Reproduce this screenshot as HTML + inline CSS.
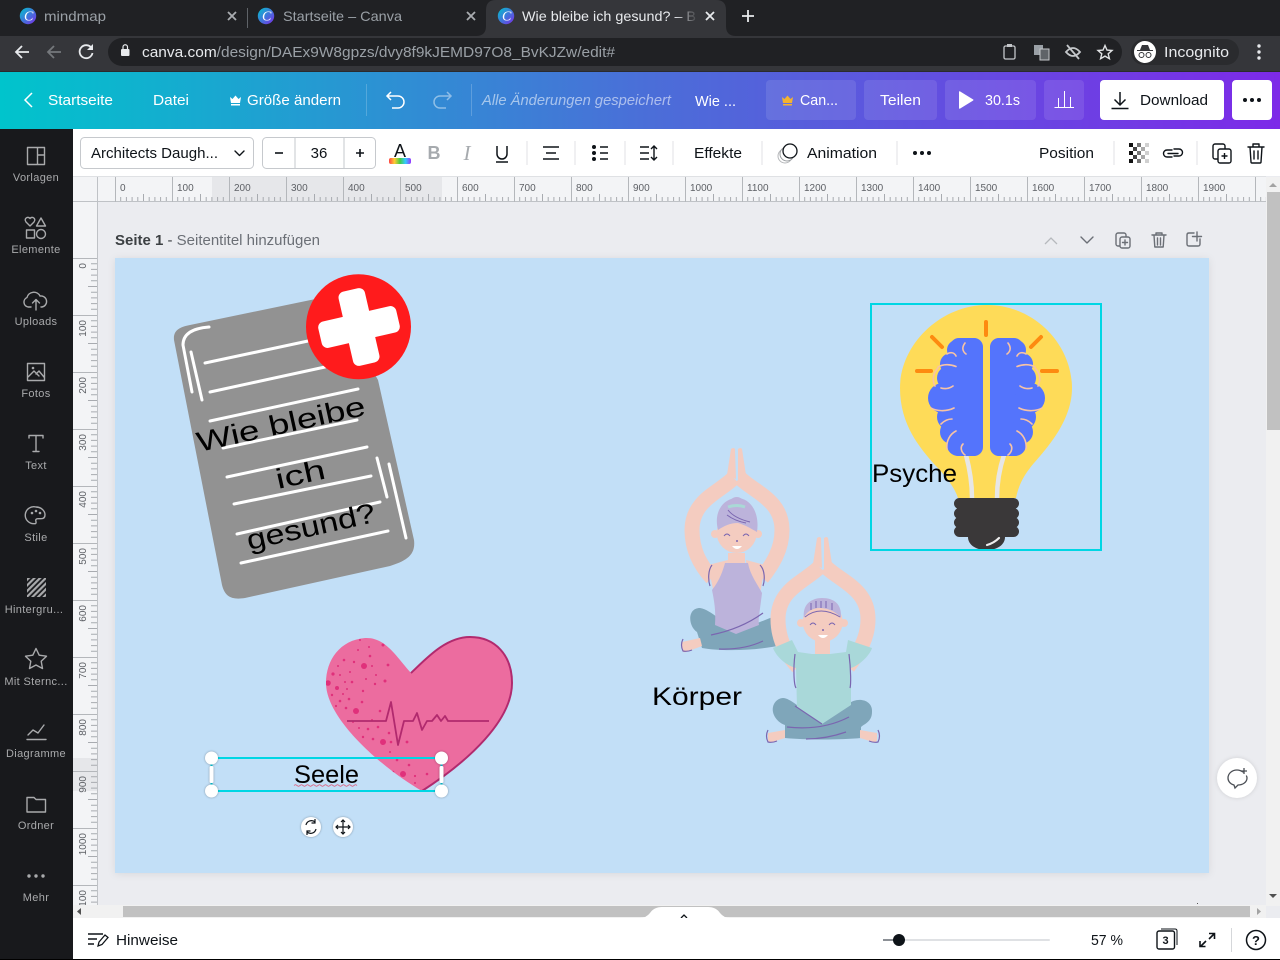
<!DOCTYPE html>
<html lang="de"><head><meta charset="utf-8"><title>Wie bleibe ich gesund?</title>
<style>
html,body{margin:0;padding:0;width:1280px;height:960px;overflow:hidden;background:#ebecf0}
svg{display:block;font-family:"Liberation Sans",sans-serif}
.si{fill:none;stroke:#a9aaac;stroke-width:1.4;stroke-linecap:round;stroke-linejoin:round}
.sl{fill:#a9aaac;font-size:11px;text-anchor:middle;letter-spacing:.35px}
.h{fill:#fff;font-size:15px;font-weight:400}
.t{fill:#0e1318;font-size:15px}
.tk{fill:none;stroke:#0e1318;stroke-width:1.4;stroke-linecap:round;stroke-linejoin:round}
.rl{fill:#5e6166;font-size:10px}
.hw{fill:#000;font-size:25px;font-weight:400}
.w{fill:none;stroke:#fff;stroke-width:3;stroke-linecap:round}
.sep{stroke:#e0e2e5;stroke-width:1}
.pg{fill:none;stroke:#6b6f76;stroke-width:1.4;stroke-linecap:round;stroke-linejoin:round}
</style></head><body>
<svg width="1280" height="960" viewBox="0 0 1280 960" xmlns="http://www.w3.org/2000/svg">
<defs>
<linearGradient id="hd" x1="0" x2="1" y1="0" y2="0"><stop offset="0" stop-color="#00c4cc"/><stop offset=".5" stop-color="#4a6fd8"/><stop offset="1" stop-color="#7d2ae8"/></linearGradient>
<linearGradient id="lg" x1="0" x2="1" y1="0" y2="1"><stop offset="0" stop-color="#00c4cc"/><stop offset="1" stop-color="#7d2ae8"/></linearGradient>
<linearGradient id="rb" x1="0" x2="1"><stop offset="0" stop-color="#f44"/><stop offset=".25" stop-color="#fc3"/><stop offset=".5" stop-color="#4c4"/><stop offset=".75" stop-color="#3cf"/><stop offset="1" stop-color="#93f"/></linearGradient>
<linearGradient id="fd" x1="0" x2="1"><stop offset="0" stop-color="#35363a" stop-opacity="0"/><stop offset="1" stop-color="#35363a"/></linearGradient>
<pattern id="tx" x="115" y="0" width="57" height="960" patternUnits="userSpaceOnUse">
<path d="M5.7 197v4M11.4 197v4M17.1 197v4M22.8 197v4M28.5 194v7M34.2 197v4M39.9 197v4M45.6 197v4M51.3 197v4" stroke="#a8abb0" stroke-width="1"/></pattern>
<pattern id="ty" x="0" y="258" width="960" height="57" patternUnits="userSpaceOnUse">
<path d="M91 5.7h6M91 11.4h6M91 17.1h6M91 22.8h6M88 28.5h9M91 34.2h6M91 39.9h6M91 45.6h6M91 51.3h6" stroke="#a8abb0" stroke-width="1"/></pattern>
<pattern id="st" x="0" y="0" width="4" height="4" patternUnits="userSpaceOnUse" patternTransform="rotate(-45)"><rect width="4" height="2.2" fill="#a9aaac"/></pattern>
<clipPath id="cl"><rect x="73" y="202" width="24" height="703"/></clipPath>
<clipPath id="hc"><path d="M411,673C395,655 385,637 365,638C340,640 326,660 326,683C326,720 385,770 422,791C470,760 512,720 512,683C512,655 495,637 470,637C445,637 425,660 411,673Z"/></clipPath>
<g id="logo"><circle r="8.2" fill="url(#lg)"/><text x="-4" y="4.6" fill="#fff" font-size="14" font-style="italic" font-family="Liberation Serif,serif">C</text></g>
<g id="hl">
<rect x="950" y="338" width="33" height="118" rx="9" fill="#5474fc"/>
<g fill="#5474fc"><circle cx="957" cy="350" r="10"/><circle cx="951" cy="364" r="11"/><circle cx="949" cy="378" r="12"/><circle cx="943" cy="398" r="15"/><circle cx="950" cy="417" r="13"/><circle cx="952" cy="432" r="12"/><circle cx="958" cy="445" r="11"/><circle cx="973" cy="348" r="10"/><circle cx="973" cy="447" r="9"/></g>
<path d="M965,343c-3,4 -3,8 1,11M947,354c3,-2 7,-2 9,2M938,367c5,-3 12,-3 18,-0.500M938,368c-5,5 -6,12 -3,18M941,388c3,1 8,1 12,-2M931,408c5,3 15,4 23,0M941,424c3,-3 7,-5 11,-5M956,431c-6,3 -10,10 -9,18M963,444c-3,3 -2,8 2,11" fill="none" stroke="#f7c3a5" stroke-width="1.600" stroke-linecap="round"/>
</g>
<g id="arms">
<path d="M733.500,478C720,492 692,500 692,530C692,550 700,565 712,578M740,478C754,492 782,500 782,530C782,550 772,565 762,578" fill="none" stroke="#f4ccc0" stroke-width="15"/>
<path d="M731,449q2.500,-2 4,0l1,30 -9,-4zM738,449q2.500,-2 4,0l4,26 -8,5z" fill="#f4ccc0"/>
</g>
<g id="face">
<circle cx="736.700" cy="533" r="20" fill="#f4ccc0"/><circle cx="715" cy="534" r="4" fill="#f4ccc0"/><circle cx="758" cy="534" r="4" fill="#f4ccc0"/>
<path d="M724,536q3,-4 6,0M743,536q3,-4 6,0" fill="none" stroke="#7a66b0" stroke-width="1"/><circle cx="737" cy="541" r="1" fill="#7a66b0"/><path d="M732,546h10q-5,6 -10,0z" fill="#fff"/>
</g>
</defs>

<!-- browser chrome -->
<rect width="1280" height="36" fill="#202124"/>
<rect y="36" width="1280" height="36" fill="#35363a"/>
<rect y="71" width="1280" height="1" fill="#2a2b2e"/>
<path d="M476,36q10,0 10,-10V10q0,-10 10,-10H716q10,0 10,10V26q0,10 10,10z" fill="#35363a"/>
<rect x="247" y="8" width="1" height="20" fill="#5f6368"/>
<use href="#logo" x="28" y="16"/><text x="44" y="21" fill="#9aa0a6" font-size="14" textLength="62" lengthAdjust="spacingAndGlyphs">mindmap</text>
<path d="M228,12l8,8M236,12l-8,8M467,12l8,8M475,12l-8,8" stroke="#a9acb0" stroke-width="1.800"/>
<use href="#logo" x="266" y="16"/><text x="283" y="21" fill="#9aa0a6" font-size="14" textLength="119" lengthAdjust="spacingAndGlyphs">Startseite – Canva</text>
<use href="#logo" x="506" y="16"/><text x="522" y="21" fill="#e8eaed" font-size="14" textLength="174" lengthAdjust="spacingAndGlyphs">Wie bleibe ich gesund? – B</text>
<rect x="676" y="6" width="22" height="20" fill="url(#fd)"/>
<path d="M706,12l8,8M714,12l-8,8" stroke="#e8eaed" stroke-width="1.800"/>
<path d="M748,10v12M742,16h12" stroke="#e8eaed" stroke-width="1.800"/>
<path d="M29,52H16m6,-6l-6,6 6,6" fill="none" stroke="#e8eaed" stroke-width="1.800"/>
<path d="M61,52H48m6,-6l-6,6 6,6" fill="none" stroke="#75787c" stroke-width="1.800"/>
<path d="M91.500,48a6.500,6.500 0 1 0 1,5" fill="none" stroke="#e8eaed" stroke-width="1.800"/><path d="M93,44v6h-6z" fill="#e8eaed"/>
<rect x="108" y="38" width="1014" height="28" rx="14" fill="#202124"/>
<rect x="121" y="49" width="8.500" height="7" rx="1" fill="#e8eaed"/><path d="M123,49v-2a2.200,2.200 0 0 1 4.500,0v2" fill="none" stroke="#e8eaed" stroke-width="1.200"/>
<text x="142" y="57" font-size="15" fill="#9aa0a6" textLength="473" lengthAdjust="spacingAndGlyphs"><tspan fill="#e8eaed">canva.com</tspan>/design/DAEx9W8gpzs/dvy8f9kJEMD97O8_BvKJZw/edit#</text>
<rect x="1004" y="46" width="11" height="13" rx="1.500" fill="none" stroke="#c4c7ca" stroke-width="1.300"/><rect x="1007" y="44" width="5" height="3" fill="#c4c7ca"/>
<rect x="1034" y="45" width="9" height="10" fill="#9aa0a6"/><rect x="1040" y="49" width="9" height="11" fill="#5f6368" stroke="#c4c7ca"/>
<path d="M1066,52q7,-8 14,0q-7,8 -14,0zM1067,45l12,14" fill="none" stroke="#c4c7ca" stroke-width="1.800"/>
<path d="M1105,45.500l2,4.600 5,.4 -3.800,3.300 1.200,4.900 -4.400,-2.600 -4.400,2.600 1.200,-4.900 -3.800,-3.300 5,-.4z" fill="none" stroke="#e0e2e4" stroke-width="1.400"/>
<rect x="1131" y="39" width="108" height="26" rx="13" fill="#2a2b2e"/>
<circle cx="1145" cy="52" r="11" fill="#fff"/><path d="M1137,50h16v1h-16zM1140,50l2,-5h6l2,5z" fill="#35363a"/><circle cx="1141.500" cy="55" r="2.500" fill="none" stroke="#35363a"/><circle cx="1148.500" cy="55" r="2.500" fill="none" stroke="#35363a"/>
<text x="1164" y="57" fill="#e8eaed" font-size="15" textLength="65" lengthAdjust="spacingAndGlyphs">Incognito</text>
<circle cx="1259" cy="46" r="1.700" fill="#e8eaed"/><circle cx="1259" cy="52" r="1.700" fill="#e8eaed"/><circle cx="1259" cy="58" r="1.700" fill="#e8eaed"/>

<!-- header -->
<rect y="72" width="1280" height="57" fill="url(#hd)"/>
<path d="M32,93l-7,7 7,7" fill="none" stroke="#fff" stroke-width="1.500"/>
<text class="h" x="48" y="105" textLength="65" lengthAdjust="spacingAndGlyphs">Startseite</text>
<text class="h" x="153" y="105" textLength="36" lengthAdjust="spacingAndGlyphs">Datei</text>
<path d="M230,97l2.500,2 3,-3.500 3,3.500 2.500,-2 -1,6h-9z M231,104h9v1.500h-9z" fill="#fff"/>
<text class="h" x="247" y="105" textLength="94" lengthAdjust="spacingAndGlyphs">Größe ändern</text>
<path d="M366.500,84v32M471.500,84v32" stroke="#fff" stroke-opacity=".2"/>
<path d="M391,92l-4,4 4,4M387.500,96H398a6,6 0 0 1 0,12H392" fill="none" stroke="#fff" stroke-width="1.500"/>
<path d="M447,92l4,4 -4,4M450.500,96H440a6,6 0 0 0 0,12H446" fill="none" stroke="#fff" stroke-opacity=".45" stroke-width="1.500"/>
<text x="482" y="105" fill="#fff" fill-opacity=".55" font-size="15" font-style="italic" textLength="189" lengthAdjust="spacingAndGlyphs">Alle Änderungen gespeichert</text>
<text class="h" x="695" y="106" textLength="41" lengthAdjust="spacingAndGlyphs">Wie ...</text>
<g fill="#fff" fill-opacity=".1"><rect x="766" y="80" width="90" height="40" rx="4"/><rect x="864" y="80" width="73" height="40" rx="4"/><rect x="945" y="80" width="91" height="40" rx="4"/><rect x="1044" y="80" width="40" height="40" rx="4"/></g>
<path d="M782,97l2.500,2 3,-3.500 3,3.500 2.500,-2 -1,6h-9z M783,104h9v1.500h-9z" fill="#f5b32e"/>
<text class="h" x="800" y="105" textLength="38" lengthAdjust="spacingAndGlyphs">Can...</text>
<text class="h" x="880" y="105" textLength="41" lengthAdjust="spacingAndGlyphs">Teilen</text>
<path d="M959,92v16q0,1 1,.6l13,-8q1,-.6 0,-1.200l-13,-8q-1,-.4 -1,.6z" fill="#fff"/>
<text class="h" x="985" y="105" textLength="35" lengthAdjust="spacingAndGlyphs">30.1s</text>
<path d="M1054.500,107.500h19.500M1058.500,107v-9M1064.500,107v-16M1070.500,107v-10" fill="none" stroke="#fff" stroke-width="1"/>
<rect x="1100" y="80" width="124" height="40" rx="4" fill="#fff"/>
<path d="M1120,92v13M1114.500,99.500l5.500,5.500 5.500,-5.500M1111.500,108.500h17" fill="none" stroke="#0e1318" stroke-width="1.500"/>
<text x="1140" y="105" font-size="15" fill="#0e1318" textLength="68" lengthAdjust="spacingAndGlyphs">Download</text>
<rect x="1232" y="80" width="40" height="40" rx="4" fill="#fff"/>
<g fill="#0e1318"><circle cx="1245" cy="100" r="2"/><circle cx="1252" cy="100" r="2"/><circle cx="1259" cy="100" r="2"/></g>

<!-- toolbar -->
<rect x="73" y="129" width="1207" height="47" fill="#fff"/>
<rect x="80.500" y="137.500" width="173" height="31" rx="4" fill="#fff" stroke="#c6c9cd"/>
<text class="t" x="91" y="158" textLength="127" lengthAdjust="spacingAndGlyphs">Architects Daugh...</text>
<path d="M235,151l4.500,4.500 4.500,-4.500" class="tk"/>
<rect x="262.500" y="137.500" width="113" height="31" rx="4" fill="#fff" stroke="#c6c9cd"/>
<path d="M295,138v30M344,138v30" stroke="#c6c9cd"/>
<path d="M275,153h8" stroke="#0e1318" stroke-width="1.600"/><path d="M356,153h8M360,149v8" stroke="#0e1318" stroke-width="1.600"/>
<text class="t" x="319" y="158" text-anchor="middle">36</text>
<text x="400" y="157" font-size="18" fill="#0e1318" text-anchor="middle">A</text><rect x="389" y="158" width="22" height="6" rx="2" fill="url(#rb)"/>
<text x="434" y="159" font-size="18" font-weight="700" fill="#a6aaae" text-anchor="middle">B</text>
<text x="467" y="160" font-size="21" font-style="italic" fill="#a6aaae" text-anchor="middle" font-family="Liberation Serif,serif">I</text>
<path d="M497,146v8a5,5 0 0 0 10,0v-8M496,162h12" fill="none" stroke="#0e1318" stroke-width="1.500"/>
<g class="sep"><path d="M527,141v24M575,141v24M625,141v24M673,141v24M762,141v24M897,141v24M1114,141v24M1197,141v24"/></g>
<path d="M543,147h16M546,153h10M543,159h16" stroke="#0e1318" stroke-width="1.600"/>
<g fill="#0e1318"><circle cx="594" cy="147" r="2"/><circle cx="594" cy="153" r="2"/><circle cx="594" cy="159" r="2"/></g><path d="M600,147h8M600,153h8M600,159h8" stroke="#0e1318" stroke-width="1.600"/>
<path d="M640,147h9M640,153h9M640,159h9" stroke="#0e1318" stroke-width="1.400"/><path d="M654,146v14M651,149l3,-3 3,3M651,157l3,3 3,-3" fill="none" stroke="#0e1318" stroke-width="1.400"/>
<text class="t" x="694" y="158" textLength="48" lengthAdjust="spacingAndGlyphs">Effekte</text>
<circle cx="785" cy="156" r="7" fill="#fff" stroke="#b6b8bb"/><circle cx="787" cy="154" r="7" fill="#fff" stroke="#9a9da0"/><circle cx="790" cy="151" r="7" fill="#fff" stroke="#0e1318" stroke-width="1.300"/>
<text class="t" x="807" y="158" textLength="70" lengthAdjust="spacingAndGlyphs">Animation</text>
<g fill="#0e1318"><circle cx="915" cy="153" r="2"/><circle cx="922" cy="153" r="2"/><circle cx="929" cy="153" r="2"/></g>
<text class="t" x="1039" y="158" textLength="55" lengthAdjust="spacingAndGlyphs">Position</text>
<g><path fill="#111" d="M1129,143h4v4h-4zM1129,151h4v4h-4zM1129,159h4v4h-4z"/><path fill="#444" d="M1133,147h4v4h-4zM1133,155h4v4h-4z"/><path fill="#777" d="M1137,143h4v4h-4zM1137,151h4v4h-4zM1137,159h4v4h-4z"/><path fill="#aaa" d="M1141,147h4v4h-4zM1141,155h4v4h-4z"/><path fill="#d0d0d0" d="M1145,143h4v4h-4zM1145,151h4v4h-4zM1145,159h4v4h-4z"/></g>
<path d="M1172,150h-5a3.500,3.500 0 0 0 0,7h5M1174,149h5a3.500,3.500 0 0 1 0,7h-5M1168,153.500h10" fill="none" stroke="#0e1318" stroke-width="1.400" stroke-linecap="round"/>
<rect x="1213" y="144" width="12" height="15" rx="2" class="tk" fill="#fff"/><rect x="1218" y="149" width="13" height="14" rx="2" fill="#fff" stroke="#0e1318" stroke-width="1.400"/><path d="M1224.500,153v6M1221.500,156h6" stroke="#0e1318" stroke-width="1.400"/>
<path d="M1248,147h16M1253,147v-3h6v3M1250,147l1,15q0,1 1,1h8q1,0 1,-1l1,-15M1254,151v8M1258,151v8" class="tk"/>

<!-- rulers -->
<rect x="73" y="176" width="1193" height="1" fill="#dfe1e4"/>
<rect x="73" y="177" width="1193" height="25" fill="#f3f4f6"/>
<rect x="212" y="177" width="230" height="25" fill="#e6e7ea"/>
<rect x="73" y="202" width="24" height="703" fill="#f3f4f6"/>
<rect x="73" y="758" width="24" height="33" fill="#e6e7ea"/>
<rect x="115" y="177" width="1151" height="25" fill="url(#tx)"/>
<rect x="73" y="258" width="24" height="647" fill="url(#ty)"/>
<path d="M97.500,177V905M73,201.500H1266" stroke="#bfc2c6"/>
<path stroke="#b4b7bb" d="M115.500,177v25M172.500,177v25M229.500,177v25M286.500,177v25M343.500,177v25M400.500,177v25M457.500,177v25M514.500,177v25M571.500,177v25M628.500,177v25M685.500,177v25M742.500,177v25M799.500,177v25M856.500,177v25M913.500,177v25M970.500,177v25M1027.500,177v25M1084.500,177v25M1141.500,177v25M1198.500,177v25M1255.500,177v25"/>
<path stroke="#b4b7bb" d="M73,258.500h24M73,315.500h24M73,372.500h24M73,429.500h24M73,486.500h24M73,543.500h24M73,600.500h24M73,657.500h24M73,714.500h24M73,771.500h24M73,828.500h24M73,885.500h24"/>
<g class="rl"><text x="120" y="191">0</text><text x="177" y="191">100</text><text x="234" y="191">200</text><text x="291" y="191">300</text><text x="348" y="191">400</text><text x="405" y="191">500</text><text x="462" y="191">600</text><text x="519" y="191">700</text><text x="576" y="191">800</text><text x="633" y="191">900</text><text x="690" y="191">1000</text><text x="747" y="191">1100</text><text x="804" y="191">1200</text><text x="861" y="191">1300</text><text x="918" y="191">1400</text><text x="975" y="191">1500</text><text x="1032" y="191">1600</text><text x="1089" y="191">1700</text><text x="1146" y="191">1800</text><text x="1203" y="191">1900</text></g>
<g class="rl" clip-path="url(#cl)" text-anchor="end">
<text transform="translate(86,263) rotate(-90)">0</text><text transform="translate(86,320) rotate(-90)">100</text><text transform="translate(86,377) rotate(-90)">200</text><text transform="translate(86,434) rotate(-90)">300</text><text transform="translate(86,491) rotate(-90)">400</text><text transform="translate(86,548) rotate(-90)">500</text><text transform="translate(86,605) rotate(-90)">600</text><text transform="translate(86,662) rotate(-90)">700</text><text transform="translate(86,719) rotate(-90)">800</text><text transform="translate(86,776) rotate(-90)">900</text><text transform="translate(86,833) rotate(-90)">1000</text><text transform="translate(86,890) rotate(-90)">1100</text></g>

<!-- page header -->
<text x="115" y="245" font-size="14.500" fill="#3c4043" textLength="205" lengthAdjust="spacingAndGlyphs"><tspan font-weight="700">Seite 1</tspan> - <tspan fill="#6b6f76">Seitentitel hinzufügen</tspan></text>
<path d="M1045,244l6,-6 6,6" fill="none" stroke="#b6b9bd" stroke-width="1.300"/>
<path d="M1081,237l6,6 6,-6" class="pg" stroke="#4b4f55"/>
<rect x="1116" y="233" width="10" height="13" rx="2" class="pg"/><rect x="1120" y="237" width="10" height="11" rx="2" fill="#ebecf0" stroke="#6b6f76" stroke-width="1.400"/><path d="M1125,240v5M1122.500,242.500h5" class="pg"/>
<path d="M1152,235h14M1156,235v-2h6v2M1154,235l.8,12h8.400l.8,-12M1157.500,238v7M1160.500,238v7" class="pg"/>
<path d="M1194,233h-5q-2,0 -2,2v9q0,2 2,2h9q2,0 2,-2v-5M1197,232v9M1192.500,236.500h9" class="pg"/>

<!-- page -->
<rect x="115" y="258" width="1094" height="615" fill="#c2dff7" style="filter:drop-shadow(0 1px 4px rgba(0,0,0,.08))"/>

<!-- clipboard -->
<path d="M174,340C173,330 180,327 190,325L330,296 378,380 414,540C416,556 405,561 390,566L245,598C232,600 225,597 222,585Z" fill="#929292"/>
<path class="w" d="M205,363L308,341M210,392L325,367M210,421L358,389M223,448L357,420M227,477L367,447M234,504L371,476M237,534L380,502M241,563L388,531M209,327Q183,329 183,345L192,392M191,352L202,400M377,458L387,497M389,464L406,538"/>
<circle cx="358.500" cy="326.700" r="52.500" fill="#ff1b1c"/>
<g transform="rotate(-13 359 327)" fill="#fff"><rect x="319" y="313.500" width="80" height="27" rx="6"/><rect x="345.500" y="289" width="27" height="76" rx="6"/></g>
<text class="hw" transform="translate(199,452) rotate(-12.500)" textLength="172" lengthAdjust="spacingAndGlyphs" style="font-size:28px">Wie bleibe</text>
<text class="hw" transform="translate(278,489) rotate(-12.500)" textLength="50" lengthAdjust="spacingAndGlyphs" style="font-size:28px">ich</text>
<text class="hw" transform="translate(249,550) rotate(-12.500)" textLength="131" lengthAdjust="spacingAndGlyphs" style="font-size:28px">gesund?</text>

<!-- bulb -->
<path d="M987,305C1035,305 1072,345 1072,388C1072,425 1040,455 1030,468C1022,478 1018,488 1016,498L958,498C955,488 945,475 935,465C920,448 900,425 900,388C900,345 940,305 987,305Z" fill="#fedb58"/>
<path d="M966,455C970,470 972,485 972,498M1004,455C999,470 997,485 997,498" fill="none" stroke="#e6e6e6" stroke-width="4.500"/>
<use href="#hl"/><use href="#hl" transform="translate(1973,0) scale(-1,1)"/>
<path d="M986,322v13M932,337l10,10M917,371h14M1041,337l-10,10M1042,371h15" fill="none" stroke="#fd8a10" stroke-width="4" stroke-linecap="round"/>
<path d="M968,537h37c0,8 -8,13 -18.500,13s-18.500,-5 -18.500,-13z" fill="#3a3839"/>
<g fill="#3a3839"><rect x="954" y="498" width="65" height="11" rx="5.500"/><rect x="954" y="508" width="65" height="11" rx="5.500"/><rect x="954" y="517" width="65" height="11" rx="5.500"/><rect x="954" y="526" width="65" height="11" rx="5.500"/></g>
<path d="M987,545Q994,543 999,538" fill="none" stroke="#eee" stroke-width="2.200" stroke-linecap="round"/>
<rect x="871" y="304" width="230" height="246" fill="none" stroke="#00d6e4" stroke-width="2"/>
<text class="hw" x="872" y="482" textLength="85" lengthAdjust="spacingAndGlyphs">Psyche</text>

<!-- yoga 1 -->
<use href="#arms"/>
<path d="M700,608C712,610 722,624 740,630L775,616 785,628 782,645C760,650 725,652 702,648L697,632C688,626 687,608 700,608Z" fill="#7fa6ba"/>
<path d="M682,642l18,-4 2,8 -16,6q-3,1 -4,-2z" fill="#f4ccc0"/><path d="M683,639q-3,6 0,12q4,1 9,-1" fill="none" stroke="#7a66b0" stroke-width="1.200"/>
<path d="M728,553h17v12h-17z" fill="#f4ccc0"/>
<path d="M708,565L728,560 726,588 714,594ZM765,565L746,560 749,588 760,594Z" fill="#f4ccc0"/>
<path d="M725,563L748,563C750,575 758,585 762,593C760,610 758,620 759,625L736,634 715,625C716,610 714,600 712,590C720,580 723,570 725,563Z" fill="#bcb3db"/>
<path d="M712,565C708,570 708,580 710,586M760,565C765,570 765,580 763,586" fill="none" stroke="#7a66b0" stroke-width="1.200"/>
<path d="M711,635q30,-6 52,-22M719,649q25,1 44,-8" fill="none" stroke="#7a66b0" stroke-width="1.200"/>
<use href="#face"/>
<path d="M718,530C713,510 725,498 737,498C750,498 760,512 757,532C750,528 745,525 738,523C730,523 724,526 718,530Z" fill="#bcb3db"/><circle cx="736.700" cy="505" r="8" fill="#bcb3db"/>
<path d="M728,507q9,-3 17,0" stroke="#a9d9d6" stroke-width="3" fill="none"/>
<path d="M728,510q6,8 22,12M727,515q8,6 19,8" fill="none" stroke="#7a66b0" stroke-width="1"/>

<!-- yoga 2 -->
<use href="#arms" transform="translate(86,89)"/>
<path d="M783,698C790,698 800,708 822,724L848,704C858,696 873,700 872,712C872,722 864,724 861,727V738C840,740 805,740 785,738V725C776,722 770,712 774,704C776,700 780,698 783,698Z" fill="#7fa6ba"/>
<path d="M768,733l17,-3 0,8 -13,4q-3,1 -4,-2zM877,733l-17,-3 0,8 13,4q3,1 4,-2z" fill="#f4ccc0"/>
<path d="M768,730q-3,6 0,12q4,1 9,-1M878,730q3,6 0,12q-4,1 -9,-1" fill="none" stroke="#7a66b0" stroke-width="1.200"/>
<path d="M815,640h15v14h-15z" fill="#f4ccc0"/>
<path d="M773,648L792,640 798,652 812,654 830,654 846,652 848,640 872,648C870,655 860,665 851,668L851,705 822,724 797,708 796,668C785,665 776,656 773,648Z" fill="#a9d8d9"/>
<path d="M795,654C793,670 794,685 796,688M849,654C851,670 851,685 850,688M787,727q35,4 62,-10M806,739q20,0 40,-7M795,706q15,10 27,18" fill="none" stroke="#7a66b0" stroke-width="1.200"/>
<use href="#face" transform="translate(86,89)"/>
<path d="M804,618C802,604 812,598 822,598C834,598 842,604 841,618C835,610 825,608 820,608C812,608 806,612 804,618Z" fill="#bcb3db"/>
<path d="M805,617q15,-12 35,0M811,603v7M816,601v7M821,601v7M826,601v7M832,603v7" fill="none" stroke="#7a66b0" stroke-width="1"/>
<text class="hw" x="652" y="705" textLength="90" lengthAdjust="spacingAndGlyphs">Körper</text>

<!-- heart -->
<path d="M411,673C395,655 385,637 365,638C340,640 326,660 326,683C326,720 385,770 422,791C470,760 512,720 512,683C512,655 495,637 470,637C445,637 425,660 411,673Z" fill="#ec6c9f"/>
<path d="M411,673C425,660 445,637 470,637C495,637 512,655 512,683C512,720 470,760 422,791" fill="none" stroke="#b12a6e" stroke-width="2"/>
<g fill="#e0307b" clip-path="url(#hc)">
<circle cx="328" cy="683" r="2.800"/><circle cx="364" cy="666" r="3"/><circle cx="356" cy="711" r="3"/><circle cx="383" cy="742" r="3"/><circle cx="403" cy="774" r="3"/><circle cx="337" cy="688" r="2"/><circle cx="333" cy="674" r="1.600"/><circle cx="340" cy="675" r="1"/><circle cx="344" cy="660" r="1.300"/><circle cx="354" cy="662" r="1.200"/><circle cx="360" cy="640" r="1"/><circle cx="369" cy="647" r="1"/><circle cx="383" cy="645" r="1.500"/><circle cx="370" cy="656" r="1.300"/><circle cx="388" cy="665" r="1.400"/><circle cx="372" cy="666" r="1"/><circle cx="376" cy="675" r="1"/><circle cx="385" cy="681" r="1.500"/><circle cx="375" cy="684" r="1.200"/><circle cx="352" cy="682" r="1.300"/><circle cx="345" cy="682" r="1"/><circle cx="347" cy="689" r="1"/><circle cx="363" cy="691" r="1.200"/><circle cx="349" cy="699" r="1.300"/><circle cx="362" cy="702" r="1.300"/><circle cx="340" cy="701" r="1.300"/><circle cx="336" cy="706" r="1.100"/><circle cx="346" cy="708" r="1.300"/><circle cx="380" cy="711" r="1.300"/><circle cx="368" cy="729" r="1.300"/><circle cx="378" cy="727" r="1.300"/><circle cx="363" cy="737" r="1.200"/><circle cx="373" cy="739" r="1.300"/><circle cx="352" cy="736" r="1"/><circle cx="389" cy="733" r="1.300"/><circle cx="391" cy="742" r="1.300"/><circle cx="407" cy="742" r="1.400"/><circle cx="397" cy="760" r="1.300"/><circle cx="409" cy="765" r="1.300"/><circle cx="393" cy="772" r="1.300"/><circle cx="415" cy="776" r="1.100"/><circle cx="427" cy="774" r="1.300"/><circle cx="415" cy="783" r="1"/><circle cx="390" cy="752" r="1"/><circle cx="332" cy="695" r="1.200"/><circle cx="338" cy="666" r="1"/><circle cx="358" cy="650" r="1"/><circle cx="350" cy="672" r="1"/><circle cx="366" cy="679" r="1"/><circle cx="343" cy="694" r="1"/><circle cx="353" cy="722" r="1"/><circle cx="359" cy="728" r="1"/><circle cx="372" cy="720" r="1"/></g>
<path d="M347,721H386L391,702 398,745 404,721H413L417,713 422,730 427,721H432L437,715 441,721 445,716 448,721H489" fill="none" stroke="#b12a6e" stroke-width="1.800" stroke-linejoin="round"/>

<!-- selection -->
<rect x="211.500" y="758" width="230" height="33" fill="none" stroke="#00d6e4" stroke-width="2"/>
<text class="hw" x="294" y="783" textLength="65" lengthAdjust="spacingAndGlyphs">Seele</text>
<path d="M294,785.500q1.500,-1.500 3,0t3,0 3,0 3,0 3,0 3,0 3,0 3,0 3,0 3,0 3,0 3,0 3,0 3,0 3,0 3,0 3,0 3,0 3,0 3,0 3,0" fill="none" stroke="#e0496a" stroke-width=".8"/>
<g fill="#fff" style="filter:drop-shadow(0 0 1px rgba(0,0,0,.35))">
<circle cx="211.500" cy="758" r="6.500"/><circle cx="441.500" cy="758" r="6.500"/><circle cx="211.500" cy="791" r="6.500"/><circle cx="441.500" cy="791" r="6.500"/>
<rect x="209.500" y="766" width="4" height="17" rx="1.500"/><rect x="439.500" y="766" width="4" height="17" rx="1.500"/>
<circle cx="311" cy="827" r="10"/><circle cx="343" cy="827" r="10"/></g>
<path d="M306,825a5.500,5.500 0 0 1 9,-3M316,829a5.500,5.500 0 0 1 -9,3M315,819v4h-3.500M307,835v-4h3.500" fill="none" stroke="#0e1318" stroke-width="1.200"/>
<path d="M343,820v14M336,827h14M341,822l2,-2 2,2M341,832l2,2 2,-2M338,825l-2,2 2,2M348,825l2,2 -2,2" fill="none" stroke="#0e1318" stroke-width="1.200"/>

<!-- comment bubble -->
<circle cx="1237" cy="778" r="20" fill="#fff" style="filter:drop-shadow(0 0 2px rgba(0,0,0,.12))"/>
<path d="M1243,772q-3,-2 -6,-2c-5,0 -9,3.500 -9,8c0,3 2,6 6,7l1,3 3,-3c5,0 9,-3 9,-7q0,-1 -.5,-2" fill="none" stroke="#4b4f55" stroke-width="1.300" stroke-linecap="round"/><path d="M1244,768v6M1241,771h6" stroke="#4b4f55" stroke-width="1.300"/>

<!-- scrollbars -->
<rect x="1266" y="177" width="14" height="729" fill="#f1f1f1"/>
<rect x="1267" y="192" width="13" height="238" fill="#c1c1c1"/>
<path d="M1269,187l4,-4 4,4z" fill="#a3a3a3"/><path d="M1269,894l4,4 4,-4z" fill="#505050"/>
<rect x="73" y="905" width="1193" height="13" fill="#f1f1f1"/>
<rect x="123" y="906" width="1127" height="11" fill="#c1c1c1"/>
<rect x="1197" y="903" width="1" height="1" fill="#555"/>
<path d="M81,908v7l-4,-3.500z" fill="#505050"/><path d="M1257,908v7l4,-3.500z" fill="#a3a3a3"/>
<path d="M640,918q6,0 10,-5q4,-6 12,-6h46q8,0 12,6q4,5 10,5z" fill="#fff"/>
<path d="M681,921l3,-3 3,3" fill="none" stroke="#0e1318" stroke-width="1.300" transform="translate(0,-3)"/>

<!-- bottom bar -->
<rect x="73" y="918" width="1207" height="41" fill="#fff"/>
<rect y="959" width="1280" height="1" fill="#000"/>
<path d="M88,934h15M88,939h9M88,944h6" stroke="#0e1318" stroke-width="1.400"/><path d="M98,946l1,-4 6,-7 3,2.500 -6,7z" fill="none" stroke="#0e1318" stroke-width="1.300"/>
<text class="t" x="116" y="945" textLength="62" lengthAdjust="spacingAndGlyphs">Hinweise</text>
<rect x="883" y="939" width="167" height="2" rx="1" fill="#dfe1e4"/><rect x="883" y="939" width="16" height="2" fill="#8c9096"/>
<circle cx="899" cy="940" r="6" fill="#0e1318"/>
<text class="t" x="1091" y="945" textLength="32" lengthAdjust="spacingAndGlyphs">57 %</text>
<path d="M1161,929h14q2,0 2,2v14" fill="none" stroke="#0e1318" stroke-width="1"/>
<rect x="1157" y="931" width="17.500" height="18" rx="2" fill="#fff" stroke="#0e1318" stroke-width="1.400"/><text x="1165.500" y="944" font-size="11" font-weight="700" fill="#0e1318" text-anchor="middle">3</text>
<path d="M1201,946l5,-5M1209,939l5,-5M1200,941v5.500h5.500M1209,933.500h5.500V939" fill="none" stroke="#0e1318" stroke-width="1.600"/>
<path d="M1231.500,928v24" stroke="#d5d7da"/>
<circle cx="1256" cy="940" r="9.500" fill="none" stroke="#0e1318" stroke-width="1.500"/><text x="1256" y="945" font-size="13" font-weight="700" fill="#0e1318" text-anchor="middle">?</text>

<!-- sidebar -->
<rect y="129" width="73" height="830" fill="#18191c"/>
<path class="si" d="M27.500,147.500h17v17h-17zM37.500,147.500v17M37.500,155h7"/>
<text class="sl" x="36" y="181">Vorlagen</text>
<path class="si" d="M30,226l-4,-4q-2,-3 1,-4.500q2,-.5 3,1q1,-1.500 3,-1q3,1.500 1,4.500zM41,218l4.500,8h-9zM26.500,230h8v8h-8zM45.500,234a4.500,4.500 0 1 1 -9,0a4.500,4.500 0 1 1 9,0z"/>
<text class="sl" x="36" y="253">Elemente</text>
<path class="si" d="M31,307h-3a5,5 0 0 1 -1,-9.500a7,7 0 0 1 13,-1.500a5.500,5.500 0 0 1 2,11h-1M36,310v-10M32.500,303l3.500,-3.500 3.500,3.500"/>
<text class="sl" x="36" y="325">Uploads</text>
<path class="si" d="M27.500,363.500h17v17h-17zM28,377l6,-6 5,5M36,374l3,-3 5,6"/><circle cx="33" cy="368" r="1.300" fill="#a9aaac"/>
<text class="sl" x="36" y="397">Fotos</text>
<path class="si" d="M29,438v-2.500h14v2.500M36,435.500v16M33,451.500h6"/>
<text class="sl" x="36" y="469">Text</text>
<path class="si" d="M36,507a8.500,8.500 0 1 0 -2,16.700q2.500,.3 2,-2q-1,-3 2,-3h3q4,0 4,-4c0,-4 -4,-7.700 -9,-7.700z"/><circle cx="32" cy="513" r="1.300" fill="#a9aaac"/><circle cx="36" cy="511" r="1.300" fill="#a9aaac"/><circle cx="40" cy="513" r="1.300" fill="#a9aaac"/>
<text class="sl" x="36" y="541">Stile</text>
<rect x="27" y="578" width="19" height="19" fill="url(#st)"/>
<text class="sl" x="34" y="613">Hintergru...</text>
<path class="si" d="M36,648.500l3.200,6.700 7.300,1 -5.300,5.100 1.300,7.200 -6.500,-3.500 -6.500,3.500 1.300,-7.200 -5.300,-5.100 7.300,-1z"/>
<text class="sl" x="36" y="685">Mit Sternc...</text>
<path class="si" d="M27,739.500h19M28,735l5,-5 5,3 6,-8"/>
<text class="sl" x="36" y="757">Diagramme</text>
<path class="si" d="M27,812v-14.500h7l2,2h9.500v12.500z"/>
<text class="sl" x="36" y="829">Ordner</text>
<g fill="#a9aaac"><circle cx="29" cy="876" r="1.700"/><circle cx="36" cy="876" r="1.700"/><circle cx="43" cy="876" r="1.700"/></g>
<text class="sl" x="36" y="901">Mehr</text>
</svg>
</body></html>
